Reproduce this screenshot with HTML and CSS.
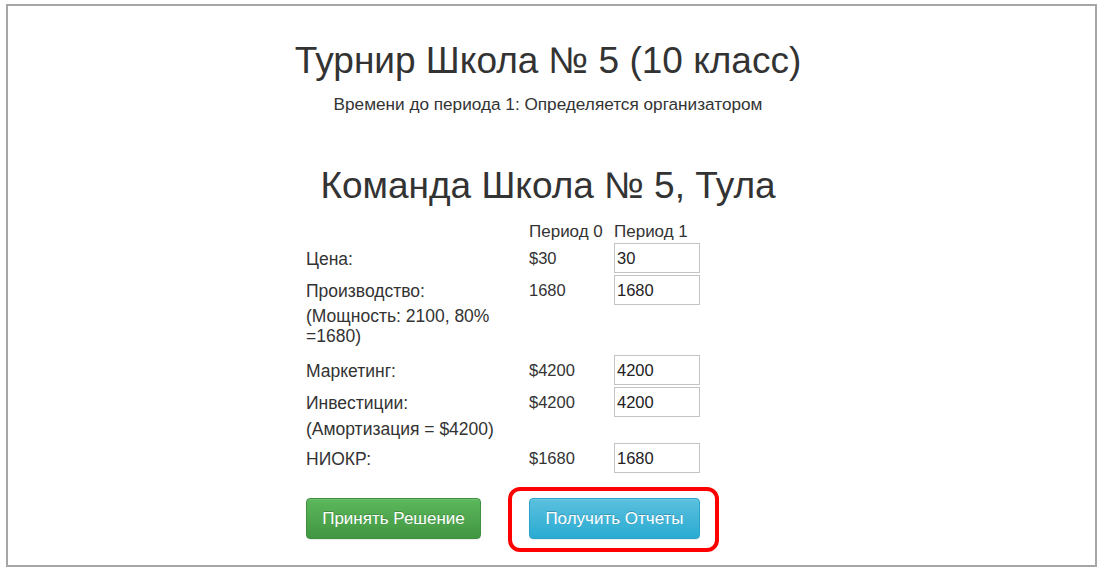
FILE: index.html
```html
<!DOCTYPE html>
<html lang="ru">
<head>
<meta charset="utf-8">
<title>Турнир Школа № 5</title>
<link rel="stylesheet" href="styles.css">
</head>
<body>
<div class="frame">
  <h1 class="title">Турнир Школа № 5 (10 класс)</h1>
  <p class="subtitle">Времени до периода 1: Определяется организатором</p>
  <h2 class="team">Команда Школа № 5, Тула</h2>
  <div class="form">
    <table class="grid">
      <tr class="head">
        <td class="c1"></td>
        <td class="c2">Период 0</td>
        <td class="c3">Период 1</td>
      </tr>
      <tr class="in">
        <td class="c1">Цена:</td>
        <td class="c2">$30</td>
        <td class="c3"><input class="field" type="text" value="30"></td>
      </tr>
      <tr class="in">
        <td class="c1">Производство:</td>
        <td class="c2">1680</td>
        <td class="c3"><input class="field" type="text" value="1680"></td>
      </tr>
      <tr class="note two">
        <td class="c1">(Мощность: 2100, 80% =1680)</td>
        <td class="c2"></td>
        <td class="c3"></td>
      </tr>
      <tr class="in">
        <td class="c1">Маркетинг:</td>
        <td class="c2">$4200</td>
        <td class="c3"><input class="field" type="text" value="4200"></td>
      </tr>
      <tr class="in">
        <td class="c1">Инвестиции:</td>
        <td class="c2">$4200</td>
        <td class="c3"><input class="field" type="text" value="4200"></td>
      </tr>
      <tr class="note one">
        <td class="c1">(Амортизация = $4200)</td>
        <td class="c2"></td>
        <td class="c3"></td>
      </tr>
      <tr class="in">
        <td class="c1">НИОКР:</td>
        <td class="c2">$1680</td>
        <td class="c3"><input class="field" type="text" value="1680"></td>
      </tr>
    </table>
    <div class="actions">
      <button class="btn btn-success" type="button">Принять Решение</button>
      <div class="highlight">
        <button class="btn btn-info" type="button">Получить Отчеты</button>
        <span class="ring"></span>
      </div>
    </div>
  </div>
</div>
</body>
</html>
```

FILE: styles.css
```css
html, body {
  margin: 0;
  padding: 0;
  background: #ffffff;
}

body {
  font-family: "Liberation Sans", Arial, Helvetica, sans-serif;
  font-size: 16px;
  line-height: 20px;
  color: #333333;
}

.frame {
  box-sizing: border-box;
  width: 1091px;
  height: 563px;
  margin: 4px 0 0 6px;
  border: 2px solid #a6a6a6;
  padding: 35px 7px 0 0;
}

.title {
  margin: 0;
  font-size: 37px;
  font-weight: 400;
  line-height: 40px;
  text-align: center;
}

.subtitle {
  margin: 13px 0 0;
  font-size: 17.2px;
  text-align: center;
}

.team {
  margin: 52px 0 0;
  font-size: 37px;
  font-weight: 400;
  line-height: 40px;
  text-align: center;
}

.form {
  width: 484px;
  margin: 16px auto 0;
}

.grid {
  border-collapse: collapse;
  border-spacing: 0;
}

.grid td {
  padding: 0;
  vertical-align: middle;
  white-space: nowrap;
}

.grid .c1 {
  width: 200px;
  padding-right: 23px;
  font-size: 17.5px;
}

.grid .note .c1 {
  white-space: normal;
}

.grid .c2 {
  width: 85px;
  font-size: 16.5px;
}

.grid .c3 {
  width: 86px;
}

.grid .head td {
  font-size: 17px;
}

.grid .in td {
  padding-top: 1px;
  padding-bottom: 1px;
}

.grid .in .c1 {
  padding-top: 2px;
}

.grid .note td {
  vertical-align: top;
}

.grid .note.two td {
  padding-bottom: 8px;
}

.grid .note.one td {
  padding-top: 1px;
  padding-bottom: 3px;
}

.field {
  box-sizing: border-box;
  display: block;
  width: 86px;
  height: 30px;
  margin: 0;
  padding: 0 2px;
  border: 1px solid #c4c4c4;
  font-family: "Liberation Sans", Arial, sans-serif;
  font-size: 16.5px;
  color: #222222;
  background: #ffffff;
}

.actions {
  display: flex;
  align-items: flex-start;
  margin-top: 24px;
}

.btn {
  box-sizing: border-box;
  height: 41px;
  padding: 0 10px;
  border: 1px solid transparent;
  border-radius: 4px;
  font-family: "Liberation Sans", Arial, sans-serif;
  font-size: 17px;
  line-height: 39px;
  color: #ffffff;
  text-shadow: 0 -1px 0 rgba(0, 0, 0, 0.2);
  box-shadow: inset 0 1px 0 rgba(255, 255, 255, 0.15), 0 1px 1px rgba(0, 0, 0, 0.075);
  cursor: pointer;
}

.btn-success {
  width: 175px;
  background-image: linear-gradient(to bottom, #5cb85c 0%, #419641 100%);
  border-color: #3e8f3e;
}

.highlight {
  position: relative;
  margin-left: 48px;
}

.btn-info {
  width: 171px;
  background-image: linear-gradient(to bottom, #5bc0de 0%, #2aabd2 100%);
  border-color: #28a4c9;
}

.ring {
  position: absolute;
  left: -21px;
  top: -11px;
  width: 211px;
  height: 65px;
  box-sizing: border-box;
  border: 4px solid #ff0000;
  border-radius: 12px;
  pointer-events: none;
}
```
